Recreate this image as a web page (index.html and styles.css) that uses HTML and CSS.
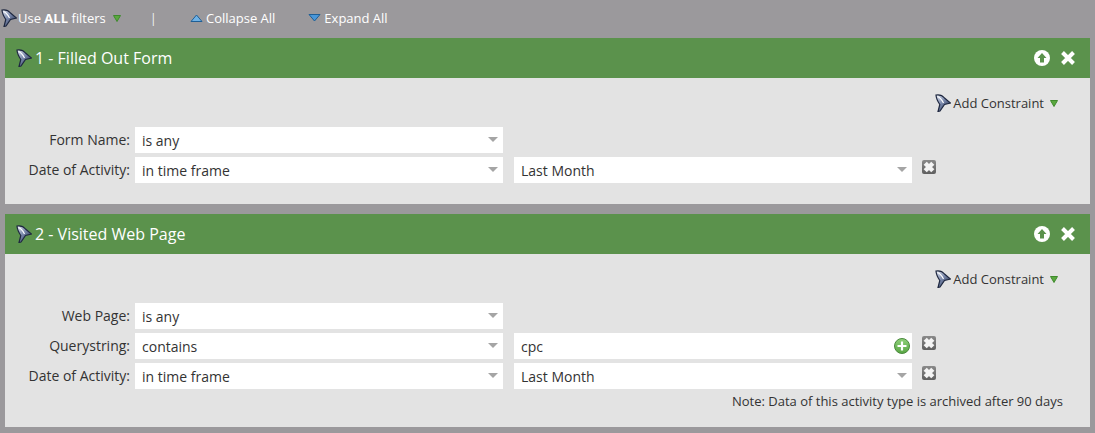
FILE: index.html
```html
<!DOCTYPE html>
<html lang="en">
<head>
    <meta charset="UTF-8">
    <title>Smart List Filters</title>
    <link rel="stylesheet" href="styles.css">
</head>
<body>

<svg class="defs" width="0" height="0">
    <defs>
        <linearGradient id="funnelFill" x1="0" y1="0" x2="1" y2="1">
            <stop offset="0" stop-color="#e6eaf3"/>
            <stop offset="0.45" stop-color="#7786aa"/>
            <stop offset="1" stop-color="#18213a"/>
        </linearGradient>
        <linearGradient id="plusFill" x1="0" y1="0" x2="0" y2="1">
            <stop offset="0" stop-color="#8fd07a"/>
            <stop offset="1" stop-color="#58a644"/>
        </linearGradient>
        <linearGradient id="boxFill" x1="0" y1="0" x2="0" y2="1">
            <stop offset="0" stop-color="#8a8a8a"/>
            <stop offset="1" stop-color="#5f5f5f"/>
        </linearGradient>
        <symbol id="funnel" viewBox="0 0 16 18">
            <path d="M1 1 C4 0.5 7.5 1.5 9.5 4 L15.5 9 L9.5 10.5 L5 17 L3 17.5 L4.8 10.5 C2.8 7.5 1.2 5 1 1 Z" fill="url(#funnelFill)" stroke="#1f2840" stroke-width="1.2"/>
            <path d="M2.5 2.5 C5 3.5 7 6 8.5 9" fill="none" stroke="#fff" stroke-width="1.2"/>
        </symbol>
        <symbol id="removeBox" viewBox="0 0 14 14">
            <rect width="14" height="14" rx="2" fill="url(#boxFill)"/>
            <path d="M3.2 3.2 L10.8 10.8 M10.8 3.2 L3.2 10.8" stroke="#f4f4f4" stroke-width="4.4"/>
        </symbol>
        <symbol id="triGreen" viewBox="0 0 8 7">
            <path d="M0.5 0.5 H7.5 L4 6.5 Z" fill="#5aa83f" stroke="#3f8a2c"/>
        </symbol>
    </defs>
</svg>

<div class="toolbar">
    <span class="tool use-all">
        <svg class="funnel-icon"><use href="#funnel"/></svg>
        <span>Use <b>ALL</b> filters</span>
        <svg class="tri-green"><use href="#triGreen"/></svg>
    </span>
    <span class="divider">|</span>
    <span class="tool collapse">
        <svg class="tri-blue" viewBox="0 0 13 8"><path d="M1 7.5 H12 L6.5 1 Z" fill="#6fb2e6" stroke="#1f5f96"/></svg>Collapse All
    </span>
    <span class="tool expand">
        <svg class="tri-blue" viewBox="0 0 13 8"><path d="M1 0.5 H12 L6.5 7 Z" fill="#4a97d8" stroke="#1f5f96"/></svg>Expand All
    </span>
</div>

<div class="filter-panel">
    <div class="panel-head">
        <svg class="funnel-icon"><use href="#funnel"/></svg>
        <span class="panel-title">1 - Filled Out Form</span>
        <svg class="head-btn" viewBox="0 0 16 16"><circle cx="8" cy="8" r="8" fill="#fff"/><path d="M8 3 L12.5 8 H10 V12.5 H6 V8 H3.5 Z" fill="#5b924c"/></svg>
        <svg class="head-btn close" viewBox="0 0 14 14"><path d="M1.5 1.5 L12.5 12.5 M12.5 1.5 L1.5 12.5" stroke="#fff" stroke-width="4"/></svg>
    </div>
    <div class="panel-body body-one">
        <div class="add-row">
            <svg class="funnel-icon"><use href="#funnel"/></svg>
            <span>Add Constraint</span>
            <svg class="tri-green"><use href="#triGreen"/></svg>
        </div>
        <div class="field-row">
            <label>Form Name:</label>
            <div class="select short">is any<span class="caret"></span></div>
        </div>
        <div class="field-row">
            <label>Date of Activity:</label>
            <div class="select short">in time frame<span class="caret"></span></div>
            <div class="select long">Last Month<span class="caret"></span></div>
            <svg class="remove"><use href="#removeBox"/></svg>
        </div>
    </div>
</div>

<div class="filter-panel">
    <div class="panel-head">
        <svg class="funnel-icon"><use href="#funnel"/></svg>
        <span class="panel-title">2 - Visited Web Page</span>
        <svg class="head-btn" viewBox="0 0 16 16"><circle cx="8" cy="8" r="8" fill="#fff"/><path d="M8 3 L12.5 8 H10 V12.5 H6 V8 H3.5 Z" fill="#5b924c"/></svg>
        <svg class="head-btn close" viewBox="0 0 14 14"><path d="M1.5 1.5 L12.5 12.5 M12.5 1.5 L1.5 12.5" stroke="#fff" stroke-width="4"/></svg>
    </div>
    <div class="panel-body">
        <div class="add-row">
            <svg class="funnel-icon"><use href="#funnel"/></svg>
            <span>Add Constraint</span>
            <svg class="tri-green"><use href="#triGreen"/></svg>
        </div>
        <div class="field-row">
            <label>Web Page:</label>
            <div class="select short">is any<span class="caret"></span></div>
        </div>
        <div class="field-row">
            <label>Querystring:</label>
            <div class="select short">contains<span class="caret"></span></div>
            <div class="select long">cpc
                <svg class="plus" viewBox="0 0 16 16"><circle cx="8" cy="8" r="7.5" fill="url(#plusFill)" stroke="#4b8a3e"/><path d="M8 3.5 V12.5 M3.5 8 H12.5" stroke="#fff" stroke-width="2.2"/></svg>
            </div>
            <svg class="remove"><use href="#removeBox"/></svg>
        </div>
        <div class="field-row">
            <label>Date of Activity:</label>
            <div class="select short">in time frame<span class="caret"></span></div>
            <div class="select long">Last Month<span class="caret"></span></div>
            <svg class="remove"><use href="#removeBox"/></svg>
        </div>
        <div class="note">Note: Data of this activity type is archived after 90 days</div>
    </div>
</div>

</body>
</html>
```

FILE: styles.css
```css
body {
    margin: 0;
    height: 433px;
    overflow: hidden;
    background-color: #9b999c;
    font-family: 'Open Sans', 'DejaVu Sans', sans-serif;
    font-size: 14px;
    color: #333;
}

.defs {
    display: block;
    height: 0;
}

.funnel-icon {
    width: 16px;
    height: 18px;
    flex: none;
}

/* top toolbar */
.toolbar {
    display: flex;
    align-items: center;
    height: 36px;
    padding: 0 0 2px 1px;
    font-size: 13px;
    color: #fff;
}

.tool {
    display: flex;
    align-items: center;
}

.use-all .funnel-icon {
    margin-right: 1px;
}

.use-all b {
    font-weight: 700;
}

.use-all .tri-green {
    margin-left: 7px;
}

.divider {
    margin-left: 29px;
    color: #f0f0f0;
}

.collapse {
    margin-left: 33px;
}

.expand {
    margin-left: 33px;
}

.tri-green {
    width: 8px;
    height: 7px;
    flex: none;
}

.tri-blue {
    width: 13px;
    height: 8px;
    margin-right: 3px;
    flex: none;
}

/* filter panels */
.filter-panel {
    margin: 0 5px 10px;
}

.panel-head {
    display: flex;
    align-items: center;
    height: 40px;
    padding: 0 15px 0 11px;
    background-color: #5b924c;
    color: #fff;
}

.panel-head .funnel-icon {
    margin-right: 3px;
}

.panel-title {
    flex: 1;
    font-size: 16px;
}

.head-btn {
    width: 16px;
    height: 16px;
}

.head-btn.close {
    width: 14px;
    height: 14px;
    margin-left: 11px;
}

.panel-body {
    height: 173px;
    padding-top: 16px;
    box-sizing: border-box;
    background-color: #e3e3e3;
}

.panel-body.body-one {
    height: 126px;
}

.add-row {
    display: flex;
    align-items: center;
    justify-content: flex-end;
    height: 18px;
    margin-bottom: 15px;
    padding-right: 32px;
    font-size: 13px;
}

.add-row .funnel-icon {
    margin-right: 2px;
}

.add-row .tri-green {
    margin-left: 6px;
}

.field-row {
    display: flex;
    align-items: flex-start;
    height: 26px;
    margin-bottom: 4px;
}

.field-row label {
    width: 125px;
    padding-right: 5px;
    font-size: 14px;
    line-height: 25px;
    text-align: right;
}

.select {
    position: relative;
    height: 26px;
    padding-left: 7px;
    box-sizing: border-box;
    background-color: #fff;
    font-size: 14px;
    line-height: 28px;
    color: #333;
}

.select.short {
    width: 368px;
}

.select.long {
    width: 398px;
    margin-left: 11px;
}

/* dropdown arrow sits over the select */
.caret {
    position: absolute;
    top: 10px;
    right: 5px;
    width: 0;
    height: 0;
    border-left: 5px solid transparent;
    border-right: 5px solid transparent;
    border-top: 5px solid #a5a5a5;
}

.plus {
    position: absolute;
    top: 5px;
    right: 2px;
    width: 16px;
    height: 16px;
}

.remove {
    width: 14px;
    height: 14px;
    margin: 3px 0 0 10px;
}

.note {
    margin-top: 1px;
    padding-right: 27px;
    font-size: 13px;
    line-height: 17px;
    text-align: right;
}
```
